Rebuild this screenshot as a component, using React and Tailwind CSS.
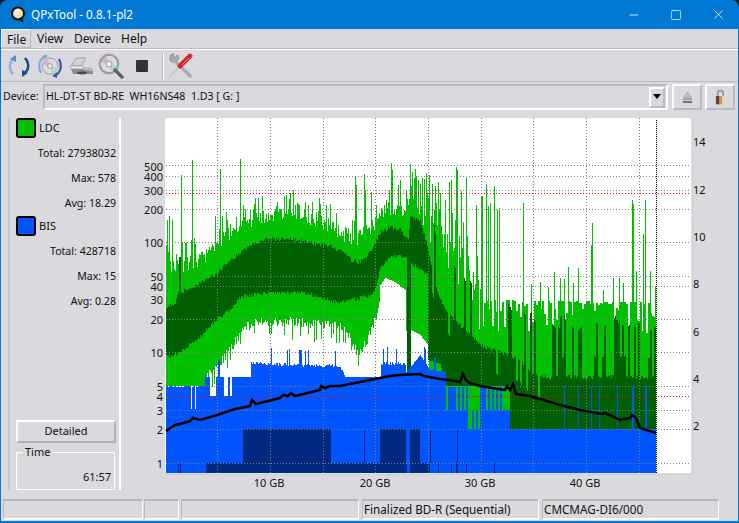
import React from "react";
import { Minus, Square, X } from "lucide-react";

const font = { fontFamily: '"Noto Sans", "Liberation Sans", sans-serif' };

// piecewise-linear lookup
function lerp(table, x) {
  if (x <= table[0][0]) return table[0][1];
  for (let i = 1; i < table.length; i++) {
    if (x <= table[i][0]) {
      const [a, b] = table[i - 1];
      const [c, d] = table[i];
      return b + ((d - b) * (x - a)) / (c - a);
    }
  }
  return table[table.length - 1][1];
}

function makeRandom(seed) {
  let s = seed;
  return () => {
    s = (s + 0x6d2b79f5) | 0;
    let t = Math.imul(s ^ (s >>> 15), 1 | s);
    t = (t + Math.imul(t ^ (t >>> 7), 61 | t)) ^ t;
    return ((t ^ (t >>> 14)) >>> 0) / 4294967296;
  };
}

const lightTop = [[166,268],[175,268],[190,262],[200,258],[210,250],[217,243],[230,232],[245,222],[260,216],[280,212],[300,214],[320,220],[340,232],[355,238],[365,232],[375,222],[385,208],[395,208],[405,212],[410,195],[420,195],[430,212],[440,232],[470,272],[480,300],[656,302]];
const darkTop = [[166,306],[175,304],[178,292],[190,290],[200,283],[217,273],[230,260],[240,253],[250,245],[265,239],[290,239],[310,243],[330,246],[345,253],[352,261],[360,262],[370,252],[380,233],[390,227],[400,230],[408,240],[410,217],[420,220],[428,250],[435,285],[445,310],[465,330],[480,345],[500,352],[520,360],[530,372],[540,377],[656,377]];
const darkBottom = [[166,357],[180,353],[190,343],[200,337],[215,320],[230,310],[240,297],[270,292],[300,293],[320,297],[340,303],[370,295],[375,290],[380,268],[390,258],[400,255],[406,258],[407,372],[410,372],[410.5,263],[427,275],[428,360],[440,364],[445,386],[509,386],[510,429],[656,429]];
const lightBottom = [[166,386],[205,386],[206,377],[220,362],[235,342],[245,327],[260,322],[300,322],[340,325],[350,337],[358,357],[370,333],[378,310],[380,285],[385,278],[395,282],[405,290],[407,372],[410,372],[411,330],[420,335],[428,345],[429,368],[445,429],[656,429]];
const blueTop = [[166,386],[205,386],[206,377],[250,377],[251,365],[340,368],[345,377],[380,377],[381,365],[405,365],[406,372],[420,355],[430,370],[445,372],[446,429],[656,429]];

const topSpikes = { 167:220,169:216,172:220,181:175,192:160,215:216,220:169,240:159,243:205,226:212,355:176,356:185,364:174,365:190,371:192,376:205,384:205,391:163,392:170,400:180,410:164,412:172,414:178,416:176,418:180,422:178,429:175,432:184,435:186,438:182,440:193,445:200,449:182,451:180,456:167,457:170,461:191,463:222,466:178,473:272,476:205,481:196,482:196,486:184,488:206,490:203,494:186,497:210,499:208,523:203,531:284,540:282,548:287,554:272,560:278,564:279,568:267,573:283,578:268,591:245,592:223,603:290,613:278,619:278,623:283,632:200,633:204,636:271,643:234,645:200,650:271,655:287 };

const darkBlue429 = [[243,331],[380,406],[410,420]];
const darkBlue463 = [[178,179],[180,181],[206,407],[412,430],[438,439],[451,452],[456,458],[466,467],[494,495]];
const darkBlueStreaks = [364,391,430,457];
const greenStreaks = [539,542,574,589,608,631];
const blueStreaks = [564,578,591,599,617,632,633,645,646];

function buildColumns() {
  const rnd = makeRandom(48213);
  const light = [];
  const dark = [];
  const blue = [];
  const deep = [];
  let lightNoise = 0;
  let notch = 0;
  let blueNoise = 0;
  for (let x = 166; x < 656; x++) {
    if (x % 2 === 0) {
      lightNoise = rnd();
      notch = rnd();
      blueNoise = rnd();
    }
    let lt = lerp(lightTop, x);
    if (x > 480) lt += lightNoise * lightNoise * lightNoise * 32;
    else lt += (rnd() - 0.5) * (x > 410 ? 70 : 16) - (rnd() > 0.86 ? 16 : 0);
    if (topSpikes[x]) lt = topSpikes[x];

    let dt = lerp(darkTop, x) + (rnd() - 0.5) * 4;
    if (x > 430 && notch > 0.78) dt -= notch * 60;
    if (x > 430 && x < 540 && notch < 0.16) dt += 22;
    if (x > 540 && notch < 0.1) dt -= 20;
    if (x === 179 || x === 180) dt = 257;

    const db = lerp(darkBottom, x) + (x < 428 ? (rnd() - 0.5) * 4 : 0);
    let lb = lerp(lightBottom, x) + (x > 205 && x < 380 ? (rnd() - 0.5) * 10 : 0);
    if (x > 205 && x < 380 && rnd() > 0.86) lb += 14;
    if (x > 428 && x < 445 && notch > 0.7) lb += 8;

    let bt = lerp(blueTop, x);
    if (x < 205) {
      if (blueNoise > 0.7) bt = 387;
    } else if (x < 233) {
      bt = blueNoise > 0.55 ? 396 : 377;
      if (x === 218 || x === 219) bt = 360;
    } else if ((x > 250 && x < 345) || (x > 380 && x < 405)) {
      const b = rnd();
      bt -= b > 0.86 ? b * 18 : b * 4;
    } else if (x > 420 && x < 445) {
      bt -= blueNoise > 0.75 ? 14 : 0;
    } else if (x >= 446 && x < 510) {
      // stepped mix of blue and light green below the dark band
      if (x > 467 && x < 480) bt = blueNoise < 0.3 ? 429 : 410;
      else if (x > 504) bt = 410;
      else bt = blueNoise < 0.12 ? 429 : blueNoise < 0.6 ? 410 : 387;
    }
    if (x === 191 || x === 195) bt = 409;
    if (blueStreaks.includes(x)) bt = 386;

    light.push(`M${x} ${Math.round(lt)}h1V${Math.round(lb)}h-1z`);
    dark.push(`M${x} ${Math.round(dt)}h1V${Math.round(db)}h-1z`);
    blue.push(`M${x} ${Math.round(bt)}h1V473h-1z`);
    if (greenStreaks.includes(x)) dark.push(`M${x} 429h1V463h-1z`);
    if (darkBlueStreaks.includes(x)) deep.push(`M${x} 429h1V463h-1z`);
  }
  darkBlue429.forEach(([a, b]) => deep.push(`M${a} 429H${b}V473H${a}z`));
  darkBlue463.forEach(([a, b]) => deep.push(`M${a} 463H${b}V473H${a}z`));
  return { light: light.join(""), dark: dark.join(""), blue: blue.join(""), deep: deep.join("") };
}

const columns = buildColumns();

const graph = [[166,431],[172,427],[175,425],[180,424],[190,421],[193,418],[200,420],[217,415],[235,409],[250,406],[252,400],[256,404],[280,398],[283,395],[288,396],[291,393],[295,396],[320,390],[321,386],[325,388],[330,386],[340,386],[375,379],[390,376],[400,375],[420,374],[424,376],[440,379],[455,381],[460,382],[463,374],[466,380],[470,383],[480,386],[505,390],[507,386],[510,390],[513,384],[516,394],[530,396],[560,405],[580,410],[602,414],[605,413],[620,420],[630,418],[632,415],[636,418],[640,428],[656,433]];

const leftTicks = [[1,463],[2,429],[3,410],[4,396],[5,386],[10,352],[20,319],[30,299],[40,286],[50,276],[100,242],[200,209],[300,190],[400,176],[500,166]];
const rightTicks = [[14,142],[12,190],[10,237],[8,284],[6,332],[4,379],[2,426]];
const gridY = [463.5,429.5,410.5,386.5,352.5,319.5,286.5,276.5,242.5,209.5,190.5,176.5,165.5];
const gridX = [217.5,270.5,323.5,375.5,428.5,481.5,533.5,586.5,639.5];
const gbLabels = [[269,"10 GB"],[375,"20 GB"],[480,"30 GB"],[585,"40 GB"]];

function Chart() {
  return (
    <svg width="600" height="375" viewBox="125 118 600 375" className="block shrink-0" style={font}>
      <rect x="165" y="118" width="527" height="356" fill="#ffffff" />
      <path d="M692 118V474H165" fill="none" stroke="#c4c4ca" />
      <g shapeRendering="crispEdges">
        <path d={columns.light} fill="#00c000" />
        <path d={columns.dark} fill="#005f00" />
        <path d={columns.blue} fill="#0055ff" />
        <path d={columns.deep} fill="#002a80" />
        <g stroke="#808080" strokeDasharray="1 2" strokeWidth="1">
          {gridY.map((y) => <line key={y} x1="166" x2="691" y1={y} y2={y} />)}
          {gridX.map((x) => <line key={x} x1={x} x2={x} y1="118" y2="473" />)}
        </g>
        <g stroke="#ff0000" strokeDasharray="1 2" strokeWidth="1">
          <line x1="166" x2="691" y1="193.5" y2="193.5" />
          <line x1="166" x2="691" y1="396.5" y2="396.5" />
        </g>
        <line x1="656.5" x2="656.5" y1="120" y2="473" stroke="#000" strokeDasharray="1 1" />
      </g>
      <polyline points={graph.map((p) => p.join(",")).join(" ")} fill="none" stroke="#000" strokeWidth="2.6" />
      <g fontSize="11" fill="#111">
        {leftTicks.map(([v, y]) => <text key={v} x="163" y={y + 5} textAnchor="end">{v}</text>)}
        {rightTicks.map(([v, y]) => <text key={v} x="693" y={y + 4}>{v}</text>)}
        {gbLabels.map(([x, t]) => <text key={t} x={x} y="487" textAnchor="middle">{t}</text>)}
      </g>
    </svg>
  );
}

function AppIcon() {
  return (
    <svg width="15" height="17" viewBox="0 0 15 17">
      <circle cx="7" cy="7.5" r="6" fill="#f7dfa8" stroke="#111" strokeWidth="2" />
      <circle cx="6" cy="6" r="2.8" fill="#fff7e6" />
      <path d="M9 12l3 4" stroke="#111" strokeWidth="2.2" />
    </svg>
  );
}

function RefreshIcon() {
  return (
    <svg width="26" height="26" viewBox="0 0 26 26" fill="none">
      <path d="M9 5C3 8 2 15 7 21" stroke="#8fb2dc" strokeWidth="2.4" />
      <path d="M10 2v7l-6-3z" fill="#5f8cc6" />
      <path d="M17 21c6-3 7-10 2-16" stroke="#23478f" strokeWidth="2.6" />
      <path d="M16 24v-7l6 3z" fill="#23478f" />
    </svg>
  );
}

function Disc({ cx, cy, r }) {
  return (
    <g>
      <circle cx={cx} cy={cy} r={r} fill="#dcdce0" stroke="#9a9aa2" />
      <path d={`M${cx} ${cy}L${cx - r} ${cy - 2}A${r} ${r} 0 0 1 ${cx - 3} ${cy - r}z`} fill="#cdb4cd" />
      <path d={`M${cx} ${cy}L${cx + r} ${cy + 2}A${r} ${r} 0 0 1 ${cx + 3} ${cy + r}z`} fill="#b2d6c6" />
      <circle cx={cx} cy={cy} r={r * 0.3} fill="#f2f2f4" stroke="#9a9aa0" />
    </g>
  );
}

function DiscRefreshIcon() {
  return (
    <svg width="26" height="26" viewBox="0 0 26 26" fill="none">
      <Disc cx={13} cy={13} r={8} />
      <path d="M9 3C3 5 0 12 4 20" stroke="#86abd8" strokeWidth="2.2" />
      <path d="M17 23c6-2 9-9 5-17" stroke="#2f5ca6" strokeWidth="2.2" />
      <path d="M20 25l-5-2 5-4z" fill="#2f5ca6" />
      <path d="M7 1l4 2-5 4z" fill="#86abd8" />
    </svg>
  );
}

function ScannerIcon() {
  return (
    <svg width="26" height="22" viewBox="0 0 26 22">
      <path d="M8 3h10l-5 8H3z" fill="#cfd1d6" stroke="#a0a2a8" />
      <path d="M2 11h12l2 3H3z" fill="#f0f0f2" stroke="#a5a7ad" />
      <path d="M3 14h14l8 2v3H5z" fill="#8b8d93" />
      <path d="M14 12l10 1 1 3-9-1z" fill="#b8bac0" />
      <ellipse cx="14" cy="18" rx="5" ry="1.4" fill="#4a4b50" />
    </svg>
  );
}

function ZoomDiscIcon() {
  return (
    <svg width="26" height="26" viewBox="0 0 26 26" fill="none">
      <Disc cx={11} cy={11} r={10} />
      <circle cx="11" cy="11" r="9" stroke="#9a9aa2" strokeWidth="1.6" />
      <path d="M17 17l7 7" stroke="#5f5f66" strokeWidth="3.4" strokeLinecap="round" />
    </svg>
  );
}

function ToolsIcon() {
  return (
    <svg width="26" height="26" viewBox="0 0 26 26" fill="none">
      <path d="M3 7c2 3 5 3 7 1 2-2 2-4 0-6L8 5 6 4l1-3C5 0 2 3 3 7z" fill="#a7acb3" stroke="#767b83" strokeWidth="0.8" />
      <path d="M8 8l15 15" stroke="#a9adb3" strokeWidth="3.4" strokeLinecap="round" />
      <path d="M2 24L13 13" stroke="#c6cacf" strokeWidth="2.2" />
      <path d="M13 13L23 3" stroke="#d8262c" strokeWidth="4.8" strokeLinecap="round" />
      <path d="M15 12L22 5" stroke="#f27a7d" strokeWidth="1" />
    </svg>
  );
}

function EjectIcon() {
  return (
    <svg width="11" height="12" viewBox="0 0 12 13">
      <path d="M6 1l4 6H2z" fill="#c0c0c6" stroke="#8f8f96" strokeWidth="0.6" />
      <rect x="1" y="8" width="10" height="2" fill="#9a9aa0" />
      <rect x="1" y="11" width="10" height="2" fill="#6c6c73" />
    </svg>
  );
}

function LockIcon() {
  return (
    <svg width="11" height="16" viewBox="0 0 12 16" fill="none">
      <path d="M3 7V4a3 3 0 0 1 6 0v3" stroke="#8f8f96" strokeWidth="1.6" />
      <rect x="1" y="7" width="4" height="9" fill="#6e3f2b" />
      <rect x="5" y="7" width="3" height="9" fill="#c49a70" />
      <rect x="8" y="7" width="3" height="9" fill="#eed9b4" />
    </svg>
  );
}

function Legend({ swatch, name, total, max, avg }) {
  return (
    <div className="flex flex-col">
      <div className="flex items-center gap-[3px] h-[20px]">
        <div className={`w-[20px] h-[20px] rounded-[3px] border-2 border-black ${swatch}`} />
        <span className="text-[11px]">{name}</span>
      </div>
      <div className="flex flex-col items-end pr-[1px] pt-[7px] gap-[9px]">
        <div className="h-[16px] leading-[16px]">Total: {total}</div>
        <div className="h-[16px] leading-[16px]">Max: {max}</div>
        <div className="h-[16px] leading-[16px]">Avg: {avg}</div>
      </div>
    </div>
  );
}

function StatusCell({ className, children }) {
  return (
    <div className={`h-[21px] border-t-2 border-l border-b-2 border-r border-t-[#b9b9c1] border-l-[#b9b9c1] border-b-white border-r-white pl-[1px] text-[11.7px] leading-[17px] truncate ${className}`}>
      {children}
    </div>
  );
}

export default function App() {
  return (
    <div className="w-[739px] h-[523px] bg-[#16202a] overflow-hidden text-[10.6px] text-[#111]" style={font}>
      <div className="w-full h-full rounded-t-[8px] bg-[#0078d4] flex flex-col px-[1px] pb-[2px] overflow-hidden">
        <div className="h-[29px] shrink-0 flex items-center text-white">
          <div className="ml-[10px] w-[20px]"><AppIcon /></div>
          <span className="text-[11.7px] leading-none">QPxTool - 0.8.1-pl2</span>
          <div className="ml-auto flex items-center text-white">
            <div className="w-[42px] flex justify-center"><Minus size={14} strokeWidth={1.3} /></div>
            <div className="w-[42px] flex justify-center"><Square size={12} strokeWidth={1.4} /></div>
            <div className="w-[42px] mr-[-1px] flex justify-center"><X size={15} strokeWidth={1.2} /></div>
          </div>
        </div>

        <div className="flex-1 min-h-0 flex flex-col bg-[#d9d9de]">
          <div className="h-[20px] shrink-0 flex items-stretch text-[12px] border-b border-b-[#b9b9c1]">
            <div className="w-[30px] pl-[5px] border border-t-white border-l-white border-r-[#b9b9c1] border-b-[#b9b9c1] leading-[19px]">File</div>
            <div className="ml-[6px] w-[37px] leading-[20px]">View</div>
            <div className="w-[47px] leading-[20px]">Device</div>
            <div className="leading-[20px]">Help</div>
          </div>

          <div className="h-[33px] shrink-0 flex items-center border-t border-t-white border-b border-b-[#b9b9c1] pl-[5px]">
            <RefreshIcon />
            <div className="ml-[5px]"><DiscRefreshIcon /></div>
            <div className="ml-[5px]"><ScannerIcon /></div>
            <div className="ml-[4px]"><ZoomDiscIcon /></div>
            <div className="ml-[12px] w-[12px] h-[12px] bg-[#333336] rounded-[1px]" />
            <div className="ml-[14px] w-[2px] h-[26px] bg-[#b9b9c1] border-r border-r-white" />
            <div className="ml-[3px]"><ToolsIcon /></div>
          </div>

          <div className="h-[30px] shrink-0 flex items-center pl-[2px]">
            <span className="w-[40px]">Device:</span>
            <div className="w-[625px] h-[26px] flex items-center border-2 border-t-[#b9b9c1] border-l-[#b9b9c1] border-b-white border-r-white pl-[1px] pr-[1px]">
              <span className="flex-1 whitespace-pre">HL-DT-ST BD-RE  WH16NS48  1.D3 [ G: ]</span>
              <div className="w-[16px] h-[21px] flex items-center justify-center border-2 border-t-white border-l-white border-b-[#b9b9c1] border-r-[#b9b9c1]">
                <svg width="8" height="6" viewBox="0 0 8 6"><path d="M0 0h8L4 5z" fill="#000" /></svg>
              </div>
            </div>
            <div className="ml-[4px] w-[30px] h-[26px] flex items-center justify-center border-2 border-t-white border-l-white border-b-[#b9b9c1] border-r-[#b9b9c1]"><EjectIcon /></div>
            <div className="ml-[3px] w-[30px] h-[26px] flex items-center justify-center border-2 border-t-white border-l-white border-b-[#b9b9c1] border-r-[#b9b9c1]"><LockIcon /></div>
          </div>

          <div className="h-[378px] shrink-0 flex pt-[6px]">
            <div className="ml-[7px] w-[113px] h-[372px] border-l-2 border-l-[#c6c6cc] border-r-2 border-r-white flex flex-col pl-[6px]">
              <div className="flex flex-col gap-[5px] w-[101px]">
                <Legend swatch="bg-[#00c000]" name="LDC" total="27938032" max="578" avg="18.29" />
                <Legend swatch="bg-[#0055ff]" name="BIS" total="428718" max="15" avg="0.28" />
              </div>
              <button className="mt-auto w-[100px] h-[23px] text-[11px] border-2 border-t-white border-l-white border-b-[#b0b0b8] border-r-[#b0b0b8]">Detailed</button>
              <div className="relative mt-[9px] w-[99px] h-[38px] border border-white flex items-end justify-end pr-[3px] pb-[5px]">
                <span className="absolute left-[6px] top-[-8px] bg-[#d9d9de] px-[2px] text-[11px] leading-[14px]">Time</span>
                <span className="text-[11px] leading-[14px]">61:57</span>
              </div>
            </div>
            <div className="ml-[4px]"><Chart /></div>
          </div>

          <div className="mt-auto flex items-end pl-[2px] pb-[1px]">
            <StatusCell className="w-[140px]" />
            <StatusCell className="w-[35px] ml-[1px]" />
            <StatusCell className="w-[178px] ml-[2px]" />
            <StatusCell className="w-[177px] ml-[3px]">Finalized BD-R (Sequential)</StatusCell>
            <StatusCell className="w-[177px] ml-[3px]">CMCMAG-DI6/000</StatusCell>
          </div>
        </div>
      </div>
    </div>
  );
}
